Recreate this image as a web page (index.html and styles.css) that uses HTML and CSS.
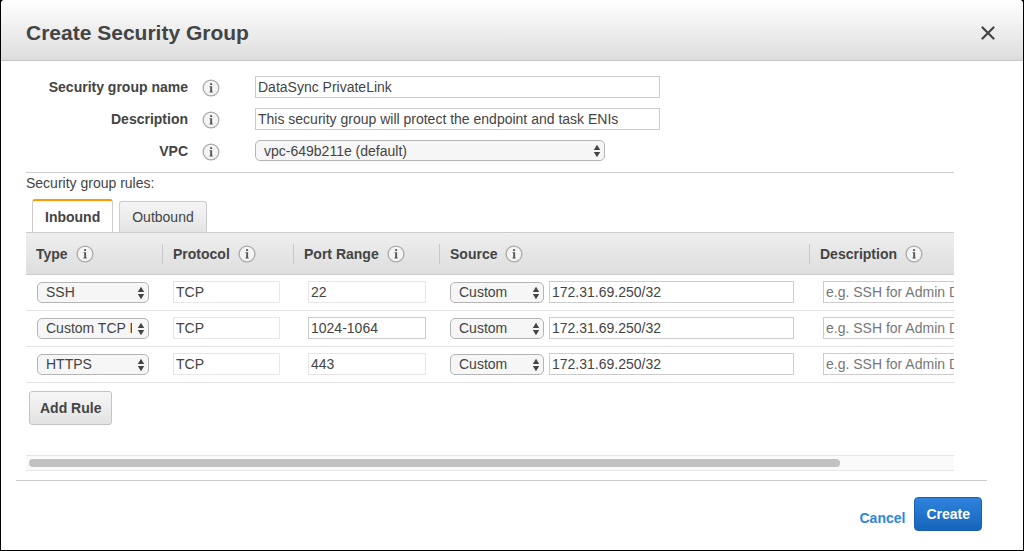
FILE: index.html
```html
<!DOCTYPE html>
<html lang="en">
  <head>
    <meta charset="utf-8">
    <title>Create Security Group</title>
    <link rel="stylesheet" href="styles.css">
  </head>

  <body>
    <svg class="icon-defs" aria-hidden="true">
      <symbol id="info" viewBox="0 0 18 18">
        <circle cx="9" cy="9" r="7.9" fill="#f4f4f4" stroke="#aaa" stroke-width="1.3"/>
        <path d="M8.1 4.3h2v1.8h-2z M7.4 7.2h2.7v5.4h.6v.9H7.5v-.9h.7V8.1h-.8z" fill="#555"/>
      </symbol>
      <symbol id="arrows" viewBox="0 0 8 14">
        <path d="M4 .8l3.2 5.2H.8z M4 13.2L7.2 8H.8z" fill="#444"/>
      </symbol>
    </svg>

    <div class="dialog">
      <header class="dialog-header">
        <h1>Create Security Group</h1>
        <button type="button" class="close" aria-label="Close">
          <svg width="14" height="14" viewBox="0 0 14 14"><path d="M1.5 1.5l11 11M12.5 1.5l-11 11" stroke="#444" stroke-width="2.2" stroke-linecap="round"/></svg>
        </button>
      </header>

      <form>
        <div class="details">
          <div class="field">
            <label for="group-name">Security group name</label>
            <svg class="info"><use href="#info"/></svg>
            <input type="text" id="group-name" value="DataSync PrivateLink">
          </div>
          <div class="field">
            <label for="group-desc">Description</label>
            <svg class="info"><use href="#info"/></svg>
            <input type="text" id="group-desc" value="This security group will protect the endpoint and task ENIs">
          </div>
          <div class="field">
            <label for="vpc">VPC</label>
            <svg class="info"><use href="#info"/></svg>
            <span class="select vpc">
              <select id="vpc"><option>vpc-649b211e (default)</option></select>
              <svg class="arrows"><use href="#arrows"/></svg>
            </span>
          </div>
        </div>

        <div class="rules">
          <p>Security group rules:</p>
          <div class="tabs">
            <button type="button" class="tab active">Inbound</button>
            <button type="button" class="tab">Outbound</button>
          </div>

          <div class="rules-pane">
            <table>
              <colgroup>
                <col class="col-type">
                <col class="col-protocol">
                <col class="col-port">
                <col class="col-source">
                <col class="col-desc">
              </colgroup>
              <thead>
                <tr>
                  <th><div class="head">Type <svg class="info"><use href="#info"/></svg></div></th>
                  <th><div class="head">Protocol <svg class="info"><use href="#info"/></svg></div></th>
                  <th><div class="head">Port Range <svg class="info"><use href="#info"/></svg></div></th>
                  <th><div class="head">Source <svg class="info"><use href="#info"/></svg></div></th>
                  <th><div class="head">Description <svg class="info"><use href="#info"/></svg></div></th>
                </tr>
              </thead>
              <tbody>
                <tr>
                  <td><span class="select"><select aria-label="Type"><option>SSH</option></select><svg class="arrows"><use href="#arrows"/></svg></span></td>
                  <td><input type="text" class="locked" aria-label="Protocol" value="TCP" readonly></td>
                  <td class="port"><input type="text" class="locked" aria-label="Port range" value="22" readonly></td>
                  <td>
                    <div class="source">
                      <span class="select"><select aria-label="Source type"><option>Custom</option></select><svg class="arrows"><use href="#arrows"/></svg></span>
                      <input type="text" aria-label="Source" value="172.31.69.250/32">
                    </div>
                  </td>
                  <td class="desc"><input type="text" aria-label="Description" placeholder="e.g. SSH for Admin Desktop"></td>
                </tr>
                <tr>
                  <td><span class="select"><select aria-label="Type"><option>Custom TCP Rule</option></select><svg class="arrows"><use href="#arrows"/></svg></span></td>
                  <td><input type="text" class="locked" aria-label="Protocol" value="TCP" readonly></td>
                  <td class="port"><input type="text" aria-label="Port range" value="1024-1064"></td>
                  <td>
                    <div class="source">
                      <span class="select"><select aria-label="Source type"><option>Custom</option></select><svg class="arrows"><use href="#arrows"/></svg></span>
                      <input type="text" aria-label="Source" value="172.31.69.250/32">
                    </div>
                  </td>
                  <td class="desc"><input type="text" aria-label="Description" placeholder="e.g. SSH for Admin Desktop"></td>
                </tr>
                <tr>
                  <td><span class="select"><select aria-label="Type"><option>HTTPS</option></select><svg class="arrows"><use href="#arrows"/></svg></span></td>
                  <td><input type="text" class="locked" aria-label="Protocol" value="TCP" readonly></td>
                  <td class="port"><input type="text" class="locked" aria-label="Port range" value="443" readonly></td>
                  <td>
                    <div class="source">
                      <span class="select"><select aria-label="Source type"><option>Custom</option></select><svg class="arrows"><use href="#arrows"/></svg></span>
                      <input type="text" aria-label="Source" value="172.31.69.250/32">
                    </div>
                  </td>
                  <td class="desc"><input type="text" aria-label="Description" placeholder="e.g. SSH for Admin Desktop"></td>
                </tr>
              </tbody>
            </table>
            <button type="button" class="add-rule">Add Rule</button>
          </div>
          <div class="scrollbar"><div class="thumb"></div></div>
        </div>

        <footer class="dialog-footer">
          <a href="#">Cancel</a>
          <button type="submit" class="create">Create</button>
        </footer>
      </form>
    </div>
  </body>
</html>
```
FILE: styles.css
```css
* {
  box-sizing: border-box;
}

body {
  margin: 0;
  background-color: #000;
  font-family: "Liberation Sans", Arial, sans-serif;
  font-size: 14px;
  line-height: 16px;
  color: #444;
}

input,
select,
button {
  font: inherit;
  color: inherit;
}

.icon-defs {
  display: none;
}

.dialog {
  margin: 0 1px 1px;
  min-height: calc(100vh - 1px);
  background-color: #fff;
  border-radius: 4px 4px 0 0;
  overflow: hidden;
}

/* header */

.dialog-header {
  display: flex;
  justify-content: space-between;
  align-items: center;
  height: 61px;
  padding: 5px 28px 0 25px;
  background: linear-gradient(#fff, #ddd);
  border-bottom: 1px solid #c4c4c4;
}

h1 {
  margin: 0;
  font-size: 21px;
  line-height: 24px;
}

.close {
  display: flex;
  padding: 0;
  border: none;
  background: none;
  cursor: pointer;
}

/* shared controls */

.info {
  flex: none;
  width: 18px;
  height: 18px;
}

input[type="text"] {
  width: 100%;
  height: 22px;
  padding: 0 2px;
  border: 1px solid #ccc;
  border-radius: 0;
  background-color: #fff;
}

input[type="text"].locked {
  border-color: #e6e6e6;
}

input::placeholder {
  color: #777;
}

.select {
  position: relative;
  display: block;
}

select {
  display: block;
  appearance: none;
  width: 100%;
  height: 21px;
  padding: 0 16px 0 8px;
  border: 1px solid #b4b4b4;
  border-radius: 5px;
  background: #f6f6f6;
}

.arrows {
  position: absolute;
  top: 4px;
  right: 4px;
  width: 8px;
  height: 14px;
  pointer-events: none;
}

/* group details */

.details {
  display: flex;
  flex-direction: column;
  gap: 10px;
  margin: 0 69px 0 25px;
  padding: 15px 0 11px;
  border-bottom: 1px solid #ccc;
}

.field {
  display: grid;
  grid-template-columns: 162px 18px minmax(0, 426px);
  align-items: center;
  column-gap: 14px;
}

.field label {
  font-weight: bold;
  text-align: right;
}

.field .info {
  margin-top: 2px;
}

.field input,
.field .select {
  width: auto;
  margin-left: 21px;
}

.field .vpc {
  width: 350px;
}

/* rules */

.rules {
  margin: 0 69px 0 25px;
}

.rules p {
  margin: 2px 0 8px;
}

.tabs {
  display: flex;
  align-items: flex-end;
  gap: 6px;
  padding-left: 6px;
}

.tab {
  height: 31px;
  padding: 0 12px;
  border: 1px solid #ccc;
  border-bottom: none;
  border-radius: 3px 3px 0 0;
  background: linear-gradient(#f5f5f5, #e4e4e4);
  cursor: pointer;
}

.tab.active {
  height: 33px;
  border-top: 2px solid #f90;
  background: #fff;
  font-weight: bold;
}

.rules-pane {
  height: 223px;
  overflow: hidden;
}

table {
  width: 1062px;
  table-layout: fixed;
  border-collapse: separate;
  border-spacing: 0;
}

.col-type {
  width: 136px;
}

.col-protocol {
  width: 131px;
}

.col-port {
  width: 146px;
}

.col-source {
  width: 370px;
}

th {
  height: 43px;
  padding: 0;
  border-top: 1px solid #ccc;
  border-bottom: 1px solid #ccc;
  background: linear-gradient(#eee, #dedede);
  text-align: left;
}

.head {
  display: flex;
  align-items: center;
  gap: 8px;
  height: 20px;
  padding-left: 10px;
}

th + th .head {
  border-left: 1px solid #c8c8c8;
}

td {
  height: 36px;
  padding: 0 13px 1px 11px;
  border-bottom: 1px solid #e2e2e2;
}

td.port {
  padding-left: 15px;
}

td.desc {
  padding-left: 14px;
}

.source {
  display: grid;
  grid-template-columns: 94px 1fr;
  gap: 5px;
  align-items: center;
  padding-right: 2px;
}

.add-rule {
  height: 34px;
  margin: 8px 3px;
  padding: 0 10px;
  border: 1px solid #c4c4c4;
  border-radius: 3px;
  background: linear-gradient(#f6f6f6, #e2e2e2);
  font-weight: bold;
  cursor: pointer;
}

.scrollbar {
  padding: 3px;
  border-top: 1px solid #e6e6e6;
  border-bottom: 1px solid #e6e6e6;
  background-color: #fafafa;
}

.thumb {
  width: 88%;
  height: 8px;
  border-radius: 4px;
  background-color: #c1c1c1;
}

/* footer */

.dialog-footer {
  display: flex;
  justify-content: flex-end;
  align-items: center;
  gap: 9px;
  margin: 9px 36px 0 15px;
  padding: 16px 5px;
  border-top: 1px solid #ccc;
}

.dialog-footer a {
  padding-top: 8px;
  color: #2e86de;
  font-weight: bold;
  text-decoration: none;
}

.create {
  height: 34px;
  padding: 0 11px;
  border: 1px solid #1c5fae;
  border-radius: 4px;
  background: linear-gradient(#2f83dc, #1565bb);
  color: #fff;
  font-weight: bold;
  cursor: pointer;
}
```
